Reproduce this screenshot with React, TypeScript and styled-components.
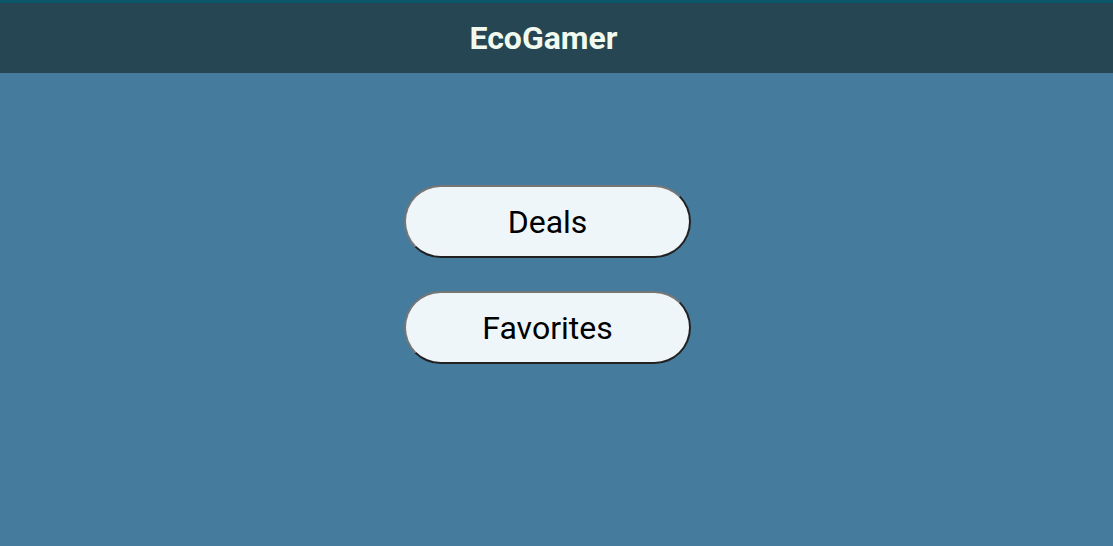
import React from "react";
import styled, { createGlobalStyle } from "styled-components";

const Global = createGlobalStyle`
  html, body { margin: 0; padding: 0; }
  body { background: #457b9d; font-family: Roboto, "Liberation Sans", sans-serif; }
`;

const Page = styled.div`
  min-height: 546px;
  background: #457b9d;
  display: flex;
  flex-direction: column;
`;

const Header = styled.header`
  border-top: 3px solid #0b5769;
  height: 70px;
  background: #264653;
  display: flex;
  align-items: center;
  justify-content: center;
  padding-right: 26px;
`;

const Title = styled.h1`
  margin: 0;
  font-size: 32px;
  font-weight: 700;
  color: #f1faee;
`;

const Main = styled.main`
  display: flex;
  flex-direction: column;
  align-items: center;
  gap: 33px;
  padding-top: 112px;
  padding-right: 18px;
`;

const NavButton = styled.button`
  width: 287px;
  height: 73px;
  border-radius: 37px;
  border: 2px outset #767676;
  background: #eff6f9;
  color: #000;
  font-family: Roboto, "Liberation Sans", sans-serif;
  font-size: 32px;
  cursor: pointer;
`;

export default function App() {
  return (
    <>
      <Global />
      <Page>
        <Header>
          <Title>EcoGamer</Title>
        </Header>
        <Main>
          <NavButton>Deals</NavButton>
          <NavButton>Favorites</NavButton>
        </Main>
      </Page>
    </>
  );
}
